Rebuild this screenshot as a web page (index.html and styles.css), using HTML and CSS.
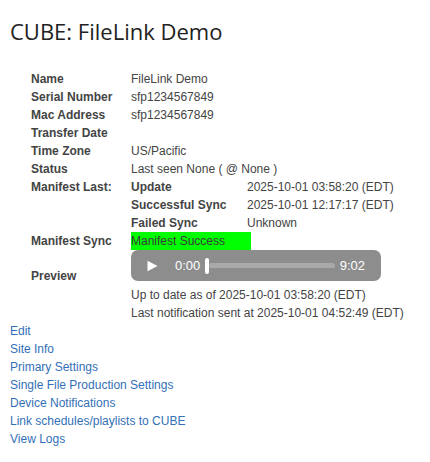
FILE: index.html
```html
<!DOCTYPE html>
<html lang="en">
<head>
  <meta charset="UTF-8" />
  <meta name="viewport" content="width=device-width, initial-scale=1.0" />
  <title>CUBE: FileLink Demo</title>
  <link rel="stylesheet" href="styles.css">
</head>
<body>
  <h1 class="title">CUBE: FileLink Demo</h1>

  <div class="details">
    <div class="label">Name</div>
    <div class="value">FileLink Demo</div>

    <div class="label">Serial Number</div>
    <div class="value">sfp1234567849</div>

    <div class="label">Mac Address</div>
    <div class="value">sfp1234567849</div>

    <div class="label">Transfer Date</div>
    <div class="value"></div>

    <div class="label">Time Zone</div>
    <div class="value">US/Pacific</div>

    <div class="label">Status</div>
    <div class="value">Last seen None ( @ None )</div>

    <div class="label">Manifest Last:</div>
    <div class="value manifest-last">
      <div class="label">Update</div>
      <div>2025-10-01 03:58:20 (EDT)</div>
      <div class="label">Successful Sync</div>
      <div>2025-10-01 12:17:17 (EDT)</div>
      <div class="label">Failed Sync</div>
      <div>Unknown</div>
    </div>

    <div class="label">Manifest Sync</div>
    <div class="value"><span class="sync-ok">Manifest Success</span></div>

    <div class="label preview-label">Preview</div>
    <div class="value">
      <div class="player">
        <svg class="play" width="11" height="12" viewBox="0 0 11 12">
          <path d="M0.5 0.8 L10.5 6 L0.5 11.2 Z" fill="#fff" />
        </svg>
        <span class="time">0:00</span>
        <span class="thumb"></span>
        <span class="track"></span>
        <span class="time">9:02</span>
      </div>
      <div>Up to date as of 2025-10-01 03:58:20 (EDT)</div>
      <div>Last notification sent at 2025-10-01 04:52:49 (EDT)</div>
    </div>
  </div>

  <ul class="links">
    <li><a href="#">Edit</a></li>
    <li><a href="#">Site Info</a></li>
    <li><a href="#">Primary Settings</a></li>
    <li><a href="#">Single File Production Settings</a></li>
    <li><a href="#">Device Notifications</a></li>
    <li><a href="#">Link schedules/playlists to CUBE</a></li>
    <li><a href="#">View Logs</a></li>
  </ul>
</body>
</html>
```

FILE: styles.css
```css
body {
  margin: 0;
  padding: 16px 10px 0;
  background: #fff;
  color: #444;
  font-family: 'Liberation Sans', Arial, sans-serif;
  font-size: 12px;
  line-height: 18px;
}

.title {
  margin: 0 0 24px;
  font-family: 'Open Sans', sans-serif;
  font-weight: normal;
  font-size: 22px;
  line-height: 30px;
  color: #222;
}

.details {
  display: grid;
  grid-template-columns: 100px auto;
  margin-left: 21px;
}

.label {
  font-weight: bold;
  color: #444;
}

.value {
  color: #444;
  min-height: 18px;
}

.manifest-last {
  display: grid;
  grid-template-columns: 116px auto;
}

.sync-ok {
  display: inline-block;
  width: 120px;
  height: 18px;
  background: #00ff00;
  color: #3a3a3a;
}

.preview-label {
  padding-top: 17px;
}

.player {
  display: flex;
  align-items: center;
  width: 250px;
  height: 31px;
  margin-bottom: 5px;
  padding: 0 16px;
  box-sizing: border-box;
  background: #8d8d8d;
  border-radius: 7px;
}

.play {
  margin-right: 17px;
}

.time {
  color: #fff;
  font-size: 13px;
}

.thumb {
  width: 4px;
  height: 16px;
  margin-left: 5px;
  background: #fff;
  border-radius: 2px;
}

.track {
  flex: 1;
  height: 5px;
  margin-right: 5px;
  background: #a9a9a9;
  border-radius: 3px;
}

.links {
  list-style: none;
  margin: 0;
  padding: 0;
}

.links a {
  color: #3370b7;
  text-decoration: none;
}
```
